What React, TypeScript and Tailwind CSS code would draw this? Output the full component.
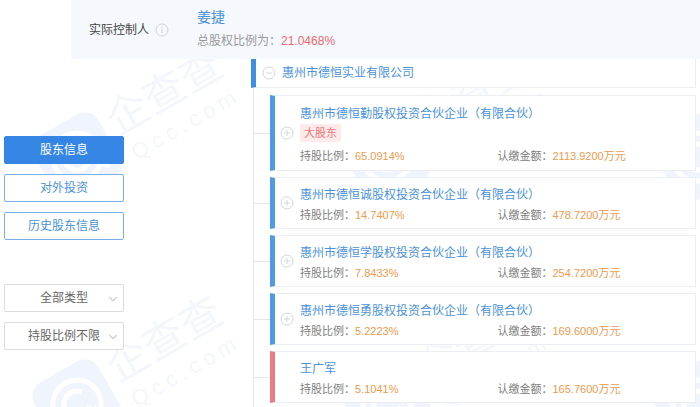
import React from "react";
import { ChevronDown } from "lucide-react";

type Holder = {
  name: string;
  ratio: string;
  amount: string;
  major?: boolean;
  person?: boolean;
};

const holders: Holder[] = [
  { name: "惠州市德恒勤股权投资合伙企业（有限合伙）", ratio: "65.0914%", amount: "2113.9200万元", major: true },
  { name: "惠州市德恒诚股权投资合伙企业（有限合伙）", ratio: "14.7407%", amount: "478.7200万元" },
  { name: "惠州市德恒学股权投资合伙企业（有限合伙）", ratio: "7.8433%", amount: "254.7200万元" },
  { name: "惠州市德恒勇股权投资合伙企业（有限合伙）", ratio: "5.2223%", amount: "169.6000万元" },
  { name: "王广军", ratio: "5.1041%", amount: "165.7600万元", person: true },
];

const Watermark: React.FC = () => (
  <svg className="absolute inset-0 w-full h-full pointer-events-none" aria-hidden="true">
    <defs>
      <pattern id="mark" width="310" height="247" patternUnits="userSpaceOnUse" x="0" y="-30">
        <g transform="translate(77 187) rotate(-30)">
          <rect x="-37" y="-37" width="74" height="74" rx="16" fill="#f0f5fd" />
          <g fill="none" stroke="#fff" strokeWidth="5">
            <circle r="24" />
            <path d="M10 8A13 13 0 1 1 10 -8M12 12L24 24" />
          </g>
          <text x="45" y="2" fontSize="42" fill="#f3f6fb">企查查</text>
          <text x="50" y="33" fontSize="22" letterSpacing="5" fill="#f3f6fb">Qcc.com</text>
        </g>
      </pattern>
    </defs>
    <rect width="100%" height="100%" fill="url(#mark)" />
  </svg>
);

const Toggle: React.FC<{ open?: boolean; label: string }> = ({ open, label }) => (
  <button aria-label={label} aria-expanded={!!open} className="shrink-0 text-[#d3d6da]">
    <svg width="14" height="14" viewBox="0 0 14 14" fill="none" stroke="currentColor" className="block">
      <circle cx="7" cy="7" r="6" />
      <path d={open ? "M4 7H10" : "M4 7H10M7 4V10"} />
    </svg>
  </button>
);

const Filter: React.FC<{ label: string }> = ({ label }) => (
  <div className="relative">
    <select
      aria-label={label}
      className="block w-full h-7 appearance-none rounded-xs border border-[#dcdcdc] bg-white text-center [text-align-last:center] text-xs text-[#666]"
    >
      <option>{label}</option>
    </select>
    <ChevronDown size={14} strokeWidth={2} className="absolute right-1 top-2 text-[#cfcfcf] pointer-events-none" />
  </div>
);

const HolderRow: React.FC<{ holder: Holder }> = ({ holder }) => (
  <li className="flex items-center">
    <div className="w-4 h-px bg-[#e4e6e9] shrink-0" />
    <div
      className={`flex flex-1 items-center border border-[#ebeef2] border-l-5 bg-white pl-[5px] ${
        holder.person ? "border-l-[#ec7c80]" : "border-l-[#4f9be3]"
      } ${holder.major ? "h-19" : "h-[52px]"}`}
    >
      <div className="w-5 shrink-0 flex">{!holder.person && <Toggle label={`展开${holder.name}`} />}</div>
      <div className="flex-1 pt-1">
        <a href="#" className="block text-xs leading-5 text-[#4a92da]">{holder.name}</a>
        {holder.major && (
          <span className="block w-fit rounded-xs bg-[#fdeaea] px-1 mb-1 text-[11px] leading-[18px] text-[#ec7676]">大股东</span>
        )}
        <div className="grid grid-cols-2 text-[11px] leading-5 text-[#808080]">
          <span>持股比例：<span className="text-[#ee9a4d]">{holder.ratio}</span></span>
          <span>认缴金额：<span className="text-[#ee9a4d]">{holder.amount}</span></span>
        </div>
      </div>
    </div>
  </li>
);

export default function App() {
  return (
    <div className="relative h-screen overflow-hidden bg-white font-['Liberation_Sans','Noto_Sans_CJK_SC',sans-serif]">
      <Watermark />
      <header className="relative ml-[71px] h-[59px] flex items-center bg-[#f5f8fd] pl-[18px]">
        <div className="w-[108px] flex items-center gap-1.5 text-xs text-[#444]">
          实际控制人
          <svg width="14" height="14" viewBox="0 0 14 14" fill="none" stroke="#d0d3d8">
            <circle cx="7" cy="7" r="6" />
            <path d="M7 6V10M7 4V5" />
          </svg>
        </div>
        <div className="pb-0.5">
          <a href="#" className="block text-sm leading-6 text-[#4a92da]">姜捷</a>
          <p className="text-xs leading-6 text-[#999]">总股权比例为：<span className="text-[#ec6a6e]">21.0468%</span></p>
        </div>
      </header>

      <div className="relative flex">
        <aside className="w-[124px] shrink-0 pl-1 pt-[77px]">
          <nav className="flex flex-col gap-2.5 text-xs text-[#4a92da]">
            <button className="h-7 rounded-xs border border-[#3586e4] bg-[#3586e4] text-white">股东信息</button>
            <button className="h-7 rounded-xs border border-[#78afe8] bg-white">对外投资</button>
            <button className="h-7 rounded-xs border border-[#78afe8] bg-white">历史股东信息</button>
          </nav>
          <div className="mt-11 flex flex-col gap-2.5">
            <Filter label="全部类型" />
            <Filter label="持股比例不限" />
          </div>
        </aside>

        <main className="flex-1 ml-[127px] mr-1">
          <div className="h-[29px] flex items-center gap-1.5 border-b border-r border-[#ebeef2] border-l-5 border-l-[#3f8fe6] bg-white pl-1.5">
            <Toggle open label="收起" />
            <a href="#" className="text-xs text-[#4a92da]">惠州市德恒实业有限公司</a>
          </div>
          <ul className="ml-0.5 h-80 flex flex-col gap-1.5 border-l border-[#e4e6e9] pt-[7px]">
            {holders.map((holder) => (
              <HolderRow key={holder.name} holder={holder} />
            ))}
          </ul>
        </main>
      </div>
    </div>
  );
}
